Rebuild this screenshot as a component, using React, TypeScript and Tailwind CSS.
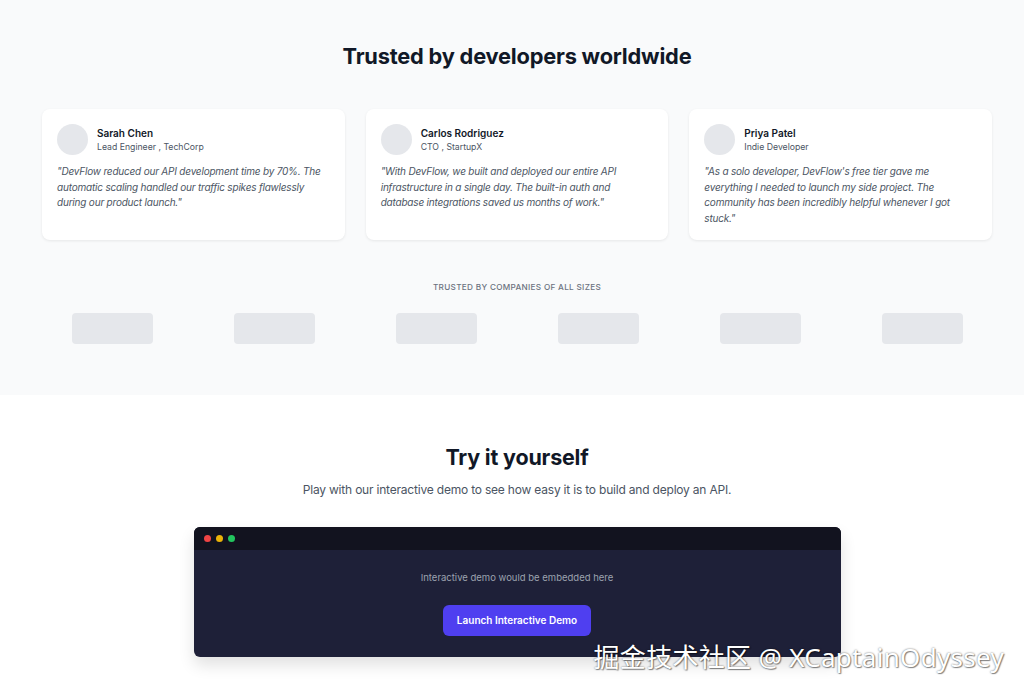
const testimonials = [
  {
    name: "Sarah Chen",
    role: "Lead Engineer , TechCorp",
    quote:
      "\"DevFlow reduced our API development time by 70%. The automatic scaling handled our traffic spikes flawlessly during our product launch.\"",
  },
  {
    name: "Carlos Rodriguez",
    role: "CTO , StartupX",
    quote:
      "\"With DevFlow, we built and deployed our entire API infrastructure in a single day. The built-in auth and database integrations saved us months of work.\"",
  },
  {
    name: "Priya Patel",
    role: "Indie Developer",
    quote:
      "\"As a solo developer, DevFlow's free tier gave me everything I needed to launch my side project. The community has been incredibly helpful whenever I got stuck.\"",
  },
];

export default function App() {
  return (
    <main
      className="relative min-h-[693px] bg-white text-[#111827]"
      style={{ fontFamily: "Inter, 'Noto Sans', sans-serif" }}
    >
      {/* testimonials */}
      <section className="bg-[#f9fafb] pt-[40px] h-[395px]">
        <div className="ml-[42px] w-[950px]">
          <h2 className="text-center text-[21.8px] leading-[32px] font-bold tracking-[-0.2px]">
            Trusted by developers worldwide
          </h2>

          <div className="mt-[37px] grid grid-cols-3 gap-[21px]">
            {testimonials.map((t) => (
              <div
                key={t.name}
                className="bg-white rounded-lg shadow-[0_1px_3px_rgba(0,0,0,0.08)] h-[131px] px-[15px] pt-[15px]"
              >
                <div className="flex items-center gap-[9px]">
                  <div className="w-[31px] h-[31px] rounded-full bg-[#e5e7eb]" />
                  <div>
                    <p className="text-[10px] leading-[14px] font-semibold">{t.name}</p>
                    <p className="text-[8.7px] leading-[14px] text-[#4b5563]">{t.role}</p>
                  </div>
                </div>
                <p className="mt-[9px] text-[10px] leading-[15.5px] tracking-[-0.2px] italic text-[#4b5563]">
                  {t.quote}
                </p>
              </div>
            ))}
          </div>

          <p className="mt-[41px] text-center text-[8.2px] leading-[12px] tracking-[0.3px] text-[#6b7280] font-medium">
            TRUSTED BY COMPANIES OF ALL SIZES
          </p>
          <div className="mt-[20px] flex justify-center gap-[81px]">
            {[0, 1, 2, 3, 4, 5].map((i) => (
              <div key={i} className="w-[81px] h-[31px] rounded bg-[#e5e7eb]" />
            ))}
          </div>
        </div>
      </section>

      {/* demo */}
      <section className="pt-[46px] pb-[35px]">
        <div className="ml-[42px] w-[950px] flex flex-col items-center">
          <h2 className="text-[21.5px] leading-[32px] font-bold tracking-[-0.2px]">Try it yourself</h2>
          <p className="mt-[9px] text-[12px] leading-[16px] tracking-[-0.2px] text-[#4b5563]">
            Play with our interactive demo to see how easy it is to build and deploy an API.
          </p>

          <div className="mt-[29px] w-[647px] rounded-md overflow-hidden shadow-[0_8px_16px_rgba(0,0,0,0.12)] bg-[#1e2038]">
            <div className="h-[23px] bg-[#12131f] flex items-center gap-[5px] px-[10px]">
              <span className="w-[7px] h-[7px] rounded-full bg-[#ef4444]" />
              <span className="w-[7px] h-[7px] rounded-full bg-[#eab308]" />
              <span className="w-[7px] h-[7px] rounded-full bg-[#22c55e]" />
            </div>
            <div className="h-[107px] flex flex-col items-center pt-[21px]">
              <p className="text-[9.5px] leading-[14px] text-[#9ca3af]">
                Interactive demo would be embedded here
              </p>
              <button className="mt-[20px] w-[148px] h-[31px] rounded-md bg-[#4f3ff0] text-white text-[10px] font-semibold">
                Launch Interactive Demo
              </button>
            </div>
          </div>
        </div>
      </section>

      <div
        className="absolute right-[20px] top-[639px] text-white text-[26px] leading-[36px] tracking-[0.3px] [text-shadow:0_0_2px_rgba(0,0,0,0.6),1px_1px_1px_rgba(0,0,0,0.4)]"
        style={{ fontFamily: "'Noto Sans', 'Noto Sans CJK SC', sans-serif" }}
      >
        掘金技术社区 @ XCaptainOdyssey
      </div>
    </main>
  );
}
